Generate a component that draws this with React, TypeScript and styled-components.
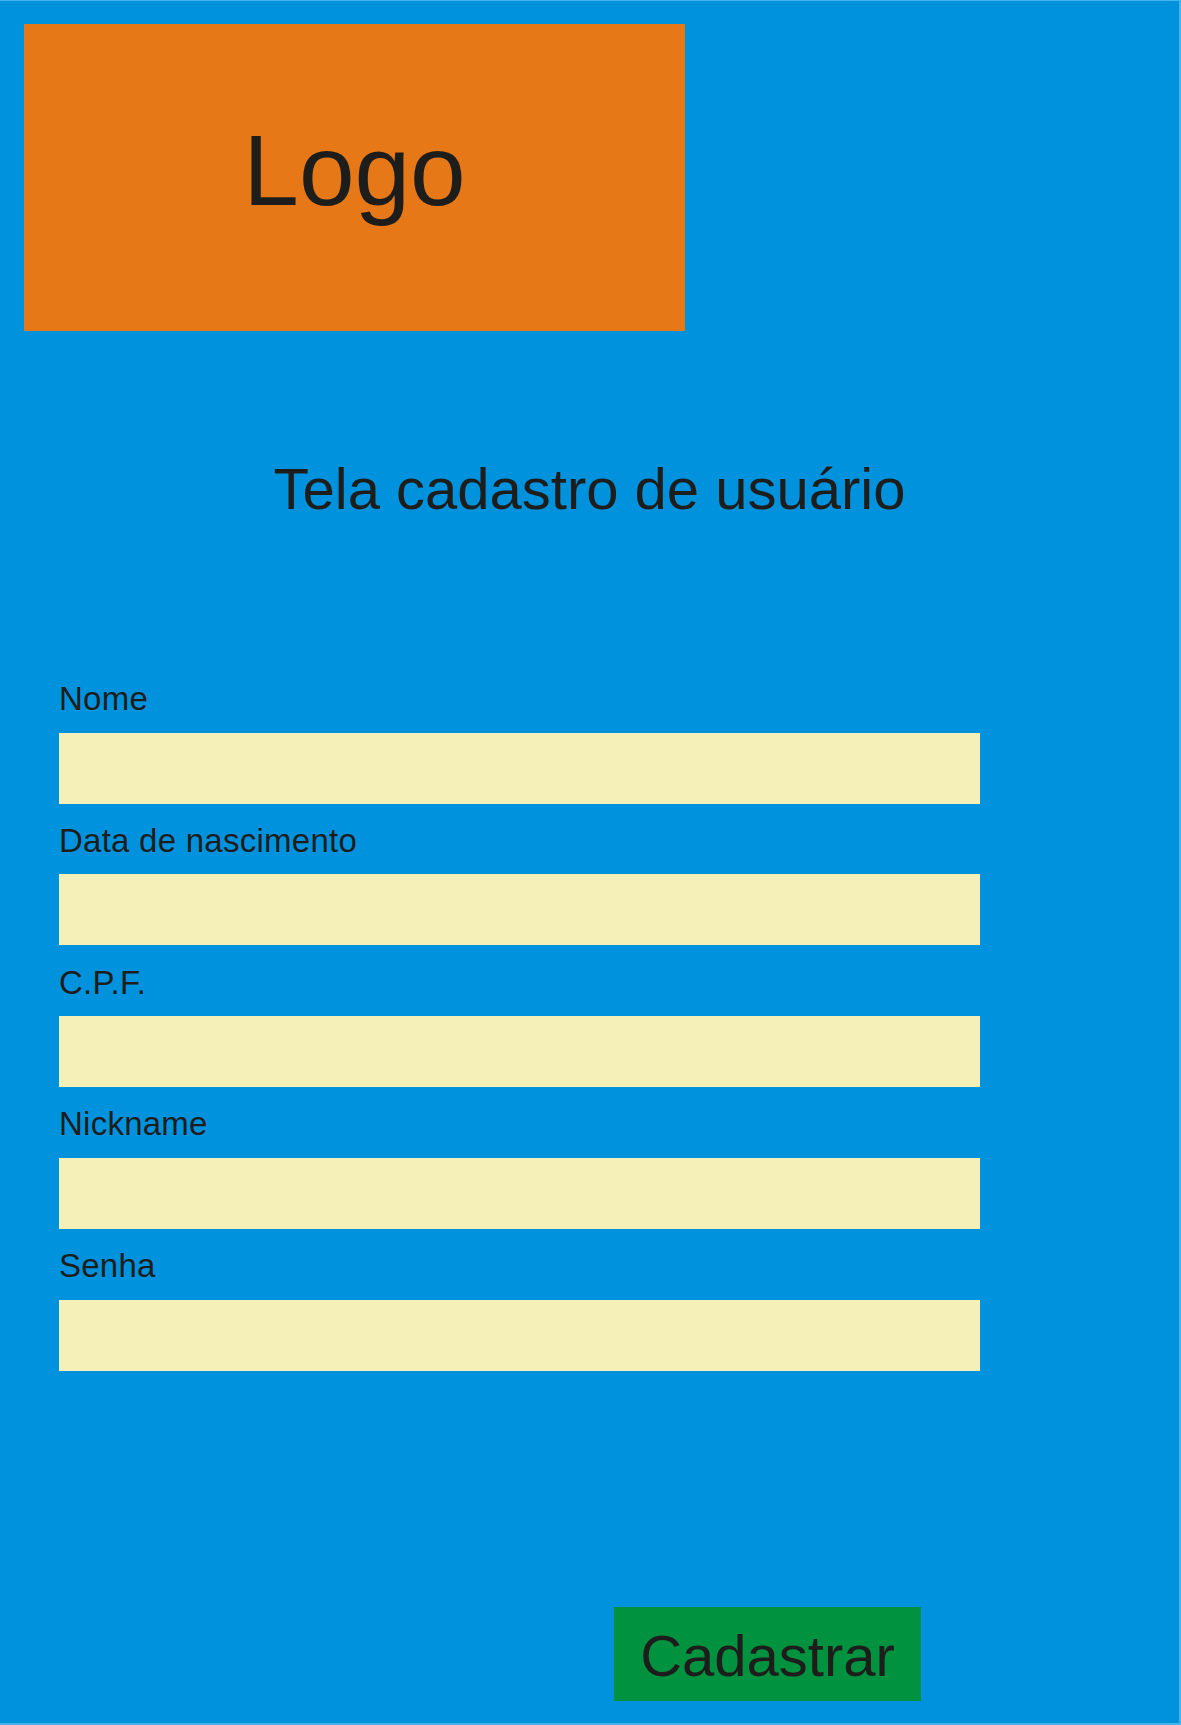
import React from "react";
import styled, { createGlobalStyle } from "styled-components";

const GlobalStyle = createGlobalStyle`
  html, body {
    margin: 0;
    padding: 0;
    background: #0092dd;
  }
  * {
    box-sizing: border-box;
  }
`;

const Page = styled.div`
  width: 1181px;
  height: 1725px;
  background: #0092dd;
  border-top: 1px solid #45b4e8;
  border-right: 2px solid #45b4e8;
  border-bottom: 2px solid #45b4e8;
  padding-top: 23px;
  display: flex;
  flex-direction: column;
  font-family: "Liberation Sans", Arial, sans-serif;
  color: #1d1d1b;
`;

const LogoBox = styled.div`
  margin-left: 24px;
  width: 661px;
  height: 307px;
  background: #e67817;
  display: flex;
  align-items: center;
  justify-content: center;
  padding-bottom: 14px;
  font-size: 100px;
`;

const Title = styled.h1`
  margin: 124px 0 0;
  font-size: 58px;
  font-weight: normal;
  text-align: center;
  line-height: normal;
`;

const Form = styled.form`
  margin-top: 158px;
  margin-left: 59px;
  width: 921px;
  display: flex;
  flex-direction: column;
  gap: 18.25px;
`;

const Field = styled.div`
  display: flex;
  flex-direction: column;
`;

const Label = styled.label`
  font-size: 33px;
  letter-spacing: 0.25px;
  line-height: 37px;
  margin-bottom: 15.5px;
`;

const Input = styled.input`
  height: 71px;
  width: 100%;
  border: none;
  outline: none;
  background: #f4f0b8;
  margin: 0;
  padding: 0 12px;
  font-family: inherit;
  font-size: 28px;
`;

const ButtonRow = styled.div`
  margin-top: 236px;
  padding-left: 614px;
  display: flex;
`;

const SubmitButton = styled.button`
  width: 307px;
  height: 94px;
  background: #00923f;
  border: none;
  margin: 0;
  padding: 4px 0 0;
  font-family: "Liberation Sans", Arial, sans-serif;
  font-size: 58px;
  color: #1d1d1b;
  display: flex;
  align-items: center;
  justify-content: center;
  cursor: pointer;
`;

const fields = ["Nome", "Data de nascimento", "C.P.F.", "Nickname", "Senha"];

export default function App() {
  return (
    <>
      <GlobalStyle />
      <Page>
        <LogoBox>Logo</LogoBox>
        <Title>Tela cadastro de usuário</Title>
        <Form onSubmit={(e) => e.preventDefault()}>
          {fields.map((f, i) => (
            <Field key={f}>
              <Label htmlFor={`f${i}`}>{f}</Label>
              <Input id={`f${i}`} type={f === "Senha" ? "password" : "text"} />
            </Field>
          ))}
        </Form>
        <ButtonRow>
          <SubmitButton type="button">Cadastrar</SubmitButton>
        </ButtonRow>
      </Page>
    </>
  );
}
